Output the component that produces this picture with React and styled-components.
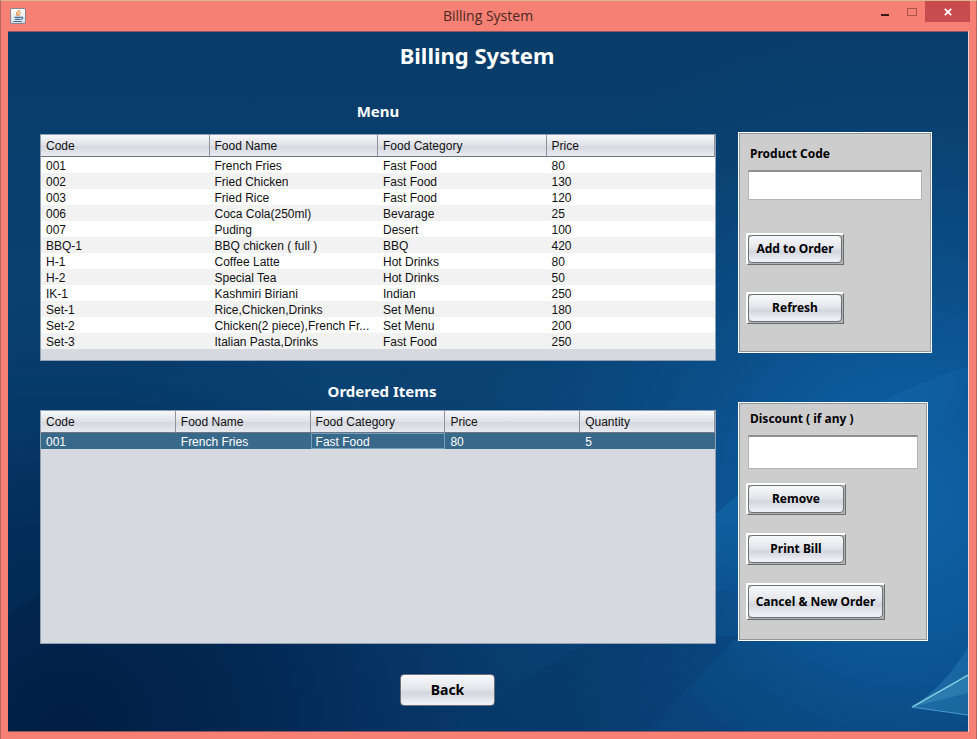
import React from "react";
import styled, { createGlobalStyle, css } from "styled-components";

const uiFont = '"Noto Sans", "Open Sans", sans-serif';
const tableFont = '"Liberation Sans", Arial, sans-serif';
const titleFont = '"Open Sans", "Noto Sans", sans-serif';

const GlobalStyle = createGlobalStyle`
  * { box-sizing: border-box; }
  body { margin: 0; background: #f58073; }
`;

const Frame = styled.div`
  display: flex;
  flex-direction: column;
  min-height: 100vh;
  background: #f58073;
  border: 1px solid #b5675f;
  border-top-color: #d9b98f;
  border-bottom: 0;
  padding: 0 8px 7px 7px;
`;

const TitleBar = styled.header`
  display: grid;
  grid-template-columns: 1fr auto 1fr;
  height: 30px;
`;

const AppIcon = styled.svg`
  width: 16px;
  height: 16px;
  margin: 7px 2px;
`;

const WindowTitle = styled.div`
  align-self: center;
  font: 14px/20px ${titleFont};
  color: #4d2723;
`;

const WindowControls = styled.div`
  display: flex;
  justify-content: flex-end;
  align-items: flex-start;
  margin-right: -2px;
`;

const WindowButton = styled.button`
  display: grid;
  place-items: center;
  width: ${(p) => (p.$close ? 45 : 27)}px;
  height: 21px;
  padding: 0;
  border: 0;
  background: ${(p) => (p.$close ? "#c84c4f" : "transparent")};
`;

const Content = styled.main`
  position: relative;
  flex: 1;
  display: flex;
  flex-direction: column;
  border: 1px solid #8c5560;
  border-width: 1px 0;
  box-shadow: 1px 0 0 #f3d3d3;
  overflow: hidden;
  background: #0a4577;
`;

const Backdrop = styled.svg`
  position: absolute;
  inset: 0;
  width: 100%;
  height: 100%;
`;

const Heading = styled.h1`
  position: relative;
  margin: 0;
  padding: 9px 22px 1px 0;
  text-align: center;
  font: bold 22px/28px ${uiFont};
  color: #fff;
`;

const Columns = styled.div`
  position: relative;
  display: grid;
  grid-template-columns: minmax(0, 1fr) 194px;
  gap: 22px;
  padding: 0 36px 0 32px;
`;

const Tables = styled.div`
  display: flex;
  flex-direction: column;
`;

const SectionTitle = styled.h2`
  margin: 0;
  height: ${(p) => (p.$tall ? 64 : 49)}px;
  padding: ${(p) => (p.$tall ? "31px 0 0" : "20px 0 0 8px")};
  text-align: center;
  font: bold 15px/20px ${uiFont};
  color: #fff;
`;

const TableBox = styled.div`
  min-height: ${(p) => p.$height}px;
  border: 1px solid #8f9fb4;
  background: #d6d9e0;
`;

const Table = styled.table`
  width: 100%;
  table-layout: fixed;
  border-collapse: separate;
  border-spacing: 0;
  font: 12px/14px ${tableFont};
  color: #111;
`;

const HeadCell = styled.th`
  height: 22px;
  padding: 0 5px;
  text-align: left;
  font-weight: normal;
  border-right: 1px solid #8e929c;
  border-bottom: 1px solid #6f7683;
  background: linear-gradient(#f7f8fa, #dfe1e7 50%, #d5d8df 55%, #e8eaf0);
`;

const Row = styled.tr`
  background: #fff;
  &:nth-child(even) { background: #f2f2f2; }
  ${(p) => p.$selected && css`
    background: #39698a;
    color: #fff;
  `}
`;

const Cell = styled.td`
  height: 16px;
  padding: 2px 5px 0;
  overflow: hidden;
  white-space: nowrap;
  text-overflow: ellipsis;
  ${(p) => p.$focused && css`box-shadow: inset 0 0 0 1px #73a0c0;`}
`;

const Side = styled.div`
  display: flex;
  flex-direction: column;
  align-items: flex-start;
  gap: 49px;
  padding-top: 62px;
`;

const Panel = styled.section`
  display: flex;
  flex-direction: column;
  align-items: flex-start;
  width: ${(p) => p.$width}px;
  height: ${(p) => p.$height}px;
  padding: ${(p) => p.$top}px 7px 0;
  border: 1px solid #fff;
  box-shadow: inset 0 0 0 1px #8d989f;
  background: #cdcdcd;
`;

const FieldLabel = styled.label`
  padding-left: 4px;
  font: bold 12px/16px ${uiFont};
  color: #000;
`;

const TextField = styled.input`
  align-self: stretch;
  height: ${(p) => p.$height}px;
  margin: 8px 2px 0;
  padding: 0 6px;
  border: 1px solid #b4b4b4;
  border-top: 2px solid #8e9092;
  background: #fff;
  font: 12px ${uiFont};
`;

const face = css`
  border: 1px solid #6c6f77;
  border-radius: 4px;
  background: linear-gradient(#f8f9fb, #e4e6eb 45%, #d3d6de 60%, #f0f1f6 95%);
`;

const BevelButton = styled.button`
  display: flex;
  width: ${(p) => p.$width}px;
  height: ${(p) => p.$height}px;
  margin-top: ${(p) => p.$gap}px;
  padding: 0 1px 1px 0;
  border: 1px solid;
  border-width: 2px 1px 1px 2px;
  border-color: #fff #6c6c6c #6c6c6c #fff;
  background: #b4b4b4;
  font: bold 12px/16px ${uiFont};
  color: #000;
`;

const ButtonFace = styled.span`
  ${face}
  flex: 1;
  align-self: stretch;
  display: flex;
  align-items: center;
  justify-content: center;
  white-space: nowrap;
`;

const Footer = styled.footer`
  position: relative;
  display: flex;
  justify-content: center;
  padding: 30px 81px 25px 0;
`;

const BackButton = styled.button`
  ${face}
  width: 95px;
  height: 32px;
  padding: 0;
  font: bold 14px/20px ${uiFont};
  color: #000;
`;

const menu = [
  ["001", "French Fries", "Fast Food", "80"],
  ["002", "Fried Chicken", "Fast Food", "130"],
  ["003", "Fried Rice", "Fast Food", "120"],
  ["006", "Coca Cola(250ml)", "Bevarage", "25"],
  ["007", "Puding", "Desert", "100"],
  ["BBQ-1", "BBQ chicken ( full )", "BBQ", "420"],
  ["H-1", "Coffee Latte", "Hot Drinks", "80"],
  ["H-2", "Special Tea", "Hot Drinks", "50"],
  ["IK-1", "Kashmiri Biriani", "Indian", "250"],
  ["Set-1", "Rice,Chicken,Drinks", "Set Menu", "180"],
  ["Set-2", "Chicken(2 piece),French Fr...", "Set Menu", "200"],
  ["Set-3", "Italian Pasta,Drinks", "Fast Food", "250"],
];

const orders = [["001", "French Fries", "Fast Food", "80", "5"]];

function DataTable({ label, columns, rows, height, selected, focusedColumn }) {
  return (
    <TableBox $height={height}>
      <Table aria-label={label}>
        <thead>
          <tr>{columns.map((c) => <HeadCell key={c} scope="col">{c}</HeadCell>)}</tr>
        </thead>
        <tbody>
          {rows.map((row, i) => (
            <Row key={row[0]} $selected={selected === i}>
              {row.map((value, j) => (
                <Cell key={columns[j]} $focused={selected === i && focusedColumn === j}>{value}</Cell>
              ))}
            </Row>
          ))}
        </tbody>
      </Table>
    </TableBox>
  );
}

function Bevel({ children, ...size }) {
  return <BevelButton type="button" {...size}><ButtonFace>{children}</ButtonFace></BevelButton>;
}

function JavaIcon() {
  return (
    <AppIcon viewBox="0 0 16 16" aria-hidden="true">
      <defs>
        <linearGradient id="tile" x1="0" y1="0" x2="0" y2="1">
          <stop offset="0" stopColor="#ffffff" />
          <stop offset="1" stopColor="#d3dbe3" />
        </linearGradient>
      </defs>
      <rect x=".5" y=".5" width="15" height="15" rx="1.5" fill="url(#tile)" stroke="#8a8790" />
      <path d="M10 2.200C7.500 3.800 5.500 5 7.300 7.800M11 4.500C8.300 5.500 8.300 6.500 9.300 8" fill="none" stroke="#e8883a" strokeWidth="1.3" />
      <path d="M4.500 9.300H11M5 11.300H10.500M3.500 13.500H12M11.300 9.200c2-.5 2 1.800-.3 2" fill="none" stroke="#45709a" strokeWidth="1.2" />
    </AppIcon>
  );
}

function Wallpaper() {
  return (
    <Backdrop viewBox="0 0 960 700" preserveAspectRatio="none" aria-hidden="true">
      <defs>
        <linearGradient id="base" x1="0" y1="0" x2="0" y2="1">
          <stop offset="0" stopColor="#083c69" />
          <stop offset=".5" stopColor="#094273" />
          <stop offset="1" stopColor="#07396c" />
        </linearGradient>
        <radialGradient id="glow" gradientUnits="userSpaceOnUse" cx="900" cy="470" r="480">
          <stop offset="0" stopColor="#0f63a8" />
          <stop offset=".35" stopColor="#0c5797" stopOpacity=".9" />
          <stop offset="1" stopColor="#0a4577" stopOpacity="0" />
        </radialGradient>
        <radialGradient id="shade" gradientUnits="userSpaceOnUse" cx="60" cy="700" r="440">
          <stop offset="0" stopColor="#011e43" />
          <stop offset=".45" stopColor="#022650" stopOpacity=".9" />
          <stop offset="1" stopColor="#052b57" stopOpacity="0" />
        </radialGradient>
        <linearGradient id="wedge" gradientUnits="userSpaceOnUse" x1="550" y1="620" x2="660" y2="780">
          <stop offset="0" stopColor="#06386a" stopOpacity=".6" />
          <stop offset="1" stopColor="#06386a" stopOpacity="0" />
        </linearGradient>
        <linearGradient id="sheen" gradientUnits="userSpaceOnUse" x1="800" y1="410" x2="850" y2="470">
          <stop offset="0" stopColor="#1a78bd" stopOpacity=".35" />
          <stop offset="1" stopColor="#1a78bd" stopOpacity="0" />
        </linearGradient>
        <linearGradient id="ray" x1="0" y1="1" x2="1" y2="0">
          <stop offset="0" stopColor="#2f86bd" stopOpacity=".55" />
          <stop offset="1" stopColor="#2f86bd" stopOpacity=".3" />
        </linearGradient>
      </defs>
      <rect width="960" height="700" fill="url(#base)" />
      <rect width="960" height="700" fill="url(#glow)" />
      <rect width="960" height="700" fill="url(#shade)" />
      <path d="M0 584Q180 460 400 340L0 340Z" fill="#0a477b" opacity=".15" />
      <path d="M440 700Q510 650 590 605H730L640 700Z" fill="url(#wedge)" />
      <path d="M660 530Q790 390 960 335V560H660Z" fill="url(#sheen)" />
      <path d="M904 676Q938 654 960 616V684Z" fill="url(#ray)" />
      <path d="M904 676L960 645V662Z" fill="#54a9cf" opacity=".3" />
      <path d="M904 676L960 644" stroke="#83cfe2" strokeWidth="1.5" />
      <path d="M904 676L960 684" stroke="#4c9bcc" strokeWidth="1" />
    </Backdrop>
  );
}

export default function App() {
  return (
    <Frame>
      <GlobalStyle />
      <TitleBar>
        <JavaIcon />
        <WindowTitle>Billing System</WindowTitle>
        <WindowControls>
          <WindowButton type="button" aria-label="Minimize">
            <svg width="10" height="12"><rect x="1" y="8" width="8" height="2" fill="#3a1a18" /></svg>
          </WindowButton>
          <WindowButton type="button" aria-label="Maximize">
            <svg width="10" height="8"><rect x=".5" y=".5" width="9" height="7" fill="none" stroke="#a8564e" /></svg>
          </WindowButton>
          <WindowButton type="button" aria-label="Close" $close>
            <svg width="8" height="8"><path d="M.8.8L7.2 7.2M7.2.8L.8 7.2" stroke="#fff" strokeWidth="1.8" /></svg>
          </WindowButton>
        </WindowControls>
      </TitleBar>
      <Content>
        <Wallpaper />
        <Heading>Billing System</Heading>
        <Columns>
          <Tables>
            <SectionTitle $tall>Menu</SectionTitle>
            <DataTable label="Menu" columns={["Code", "Food Name", "Food Category", "Price"]} rows={menu} height={227} />
            <SectionTitle>Ordered Items</SectionTitle>
            <DataTable
              label="Ordered Items"
              columns={["Code", "Food Name", "Food Category", "Price", "Quantity"]}
              rows={orders}
              height={234}
              selected={0}
              focusedColumn={2}
            />
          </Tables>
          <Side>
            <Panel $width={194} $height={221} $top={13}>
              <FieldLabel htmlFor="product">Product Code</FieldLabel>
              <TextField id="product" type="text" $height={30} />
              <Bevel $width={98} $height={32} $gap={33}>Add to Order</Bevel>
              <Bevel $width={98} $height={32} $gap={27}>Refresh</Bevel>
            </Panel>
            <Panel $width={190} $height={239} $top={8}>
              <FieldLabel htmlFor="discount">Discount ( if any )</FieldLabel>
              <TextField id="discount" type="text" $height={34} />
              <Bevel $width={100} $height={32} $gap={14}>Remove</Bevel>
              <Bevel $width={100} $height={32} $gap={18}>Print Bill</Bevel>
              <Bevel $width={139} $height={37} $gap={18}>Cancel &amp; New Order</Bevel>
            </Panel>
          </Side>
        </Columns>
        <Footer><BackButton type="button">Back</BackButton></Footer>
      </Content>
    </Frame>
  );
}
